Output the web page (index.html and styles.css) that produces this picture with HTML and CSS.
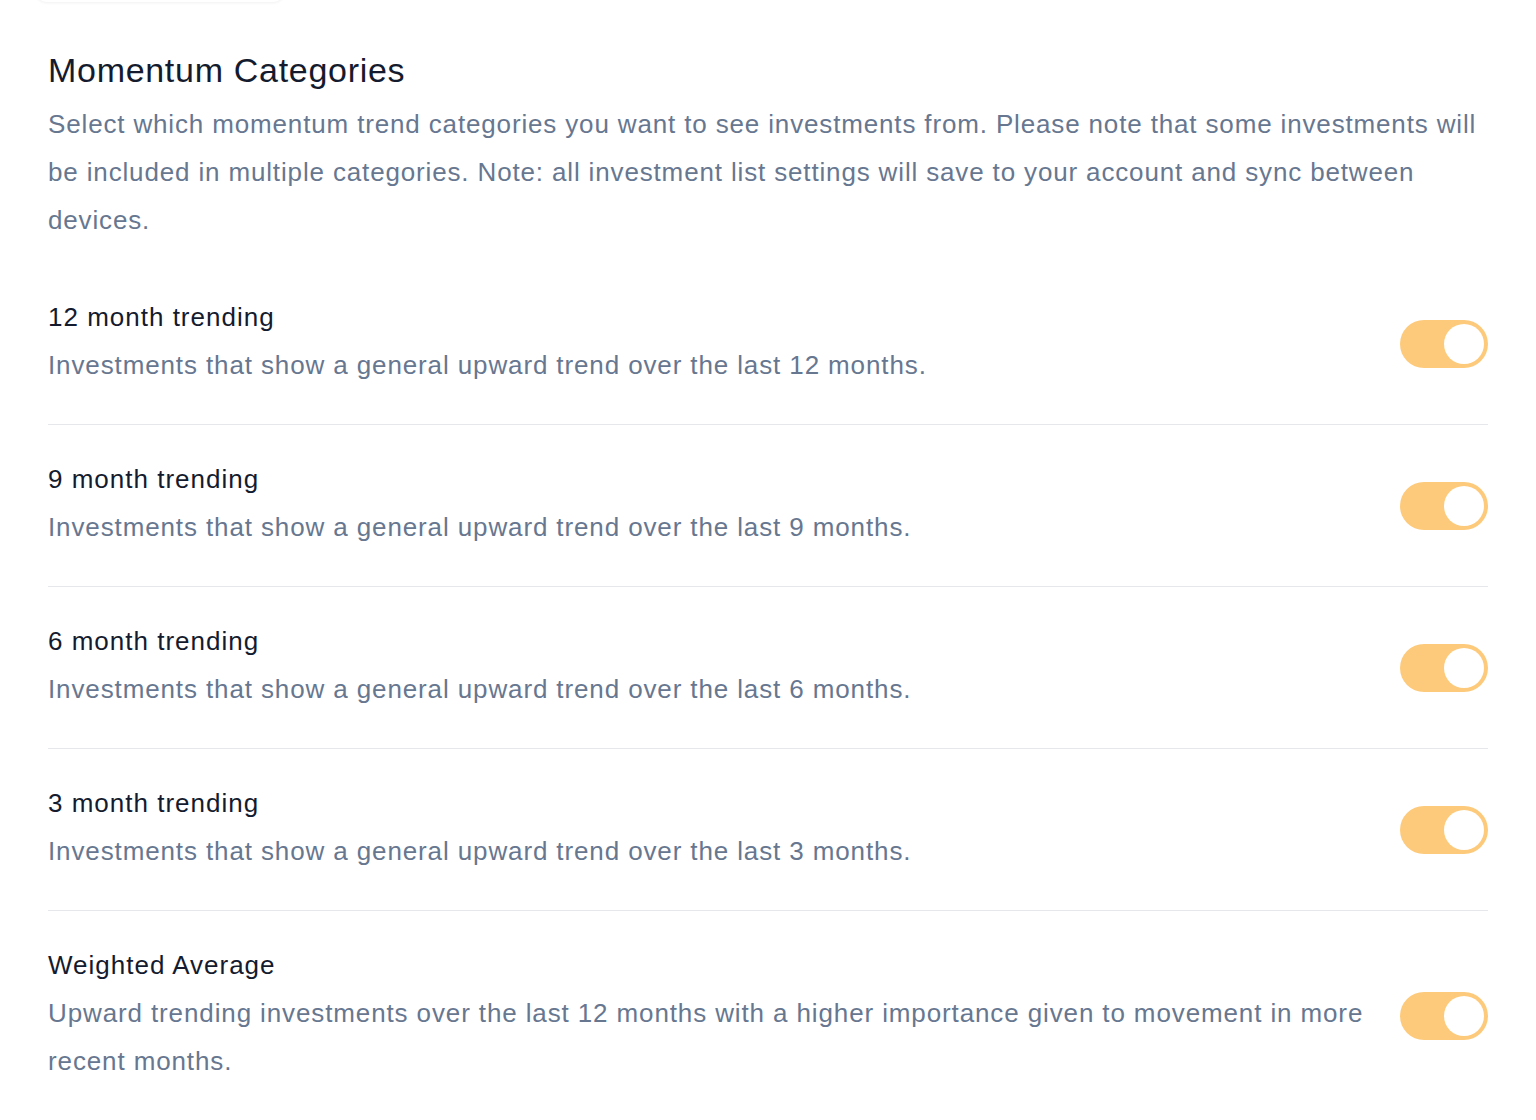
FILE: index.html
```html
<!DOCTYPE html>
<html lang="en">

<head>
    <meta charset="UTF-8">
    <title>Momentum Categories</title>
    <link rel="stylesheet" href="styles.css">
</head>

<body>
    <div class="topkort"></div>

    <main class="indstillinger">
        <h1>Momentum Categories</h1>
        <p class="intro">Select which momentum trend categories you want to see investments from. Please note that some investments will be included in multiple categories. Note: all investment list settings will save to your account and sync between devices.</p>

        <ul class="liste">
            <li class="raekke">
                <div class="tekst">
                    <h3>12 month trending</h3>
                    <p>Investments that show a general upward trend over the last 12 months.</p>
                </div>
                <button class="toggle til" aria-pressed="true"><span class="knap"></span></button>
            </li>
            <li class="raekke">
                <div class="tekst">
                    <h3>9 month trending</h3>
                    <p>Investments that show a general upward trend over the last 9 months.</p>
                </div>
                <button class="toggle til" aria-pressed="true"><span class="knap"></span></button>
            </li>
            <li class="raekke">
                <div class="tekst">
                    <h3>6 month trending</h3>
                    <p>Investments that show a general upward trend over the last 6 months.</p>
                </div>
                <button class="toggle til" aria-pressed="true"><span class="knap"></span></button>
            </li>
            <li class="raekke">
                <div class="tekst">
                    <h3>3 month trending</h3>
                    <p>Investments that show a general upward trend over the last 3 months.</p>
                </div>
                <button class="toggle til" aria-pressed="true"><span class="knap"></span></button>
            </li>
            <li class="raekke">
                <div class="tekst">
                    <h3>Weighted Average</h3>
                    <p>Upward trending investments over the last 12 months with a higher importance given to movement in more recent months.</p>
                </div>
                <button class="toggle til" aria-pressed="true"><span class="knap"></span></button>
            </li>
        </ul>
    </main>
</body>

</html>
```

FILE: styles.css
```css
body {
    margin: 0;
    background-color: #fff;
    font-family: "Liberation Sans", Arial, sans-serif;
    color: #151b2e;
}

.topkort {
    width: 250px;
    height: 40px;
    margin: -38px 0 0 35px;
    border-radius: 12px;
    background-color: #fff;
    box-shadow: 0 1px 3px rgba(0, 0, 0, .06);
}

.indstillinger {
    padding: 0 48px;
}

h1 {
    margin: 44px 0 6px;
    font-size: 34px;
    font-weight: 400;
    line-height: 48px;
    letter-spacing: 0.7px;
    color: #151b2e;
}

.intro {
    margin: 0 0 19px;
    font-size: 26px;
    line-height: 48px;
    letter-spacing: 0.85px;
    color: #677790;
}

.liste {
    list-style: none;
    margin: 0;
    padding: 0;
}

.raekke {
    display: flex;
    align-items: center;
    gap: 24px;
    padding: 30px 0 35px;
    border-bottom: 1px solid #e5e7eb;
}

.raekke:last-child {
    border-bottom: none;
}

.tekst {
    flex: 1;
}

.tekst h3 {
    margin: 0;
    font-size: 26px;
    font-weight: 400;
    line-height: 48px;
    letter-spacing: 1px;
    color: #151b2e;
}

.tekst p {
    margin: 0;
    font-size: 26px;
    line-height: 48px;
    letter-spacing: 0.88px;
    color: #677790;
}

.toggle {
    position: relative;
    flex: none;
    width: 88px;
    height: 48px;
    margin-top: 6px;
    padding: 0;
    border: none;
    border-radius: 24px;
    background-color: #e5e7eb;
    cursor: pointer;
}

.toggle.til {
    background-color: #fdca7b;
}

.knap {
    position: absolute;
    top: 4px;
    left: 4px;
    width: 40px;
    height: 40px;
    border-radius: 50%;
    background-color: #fff;
}

.til .knap {
    left: 44px;
}
```
